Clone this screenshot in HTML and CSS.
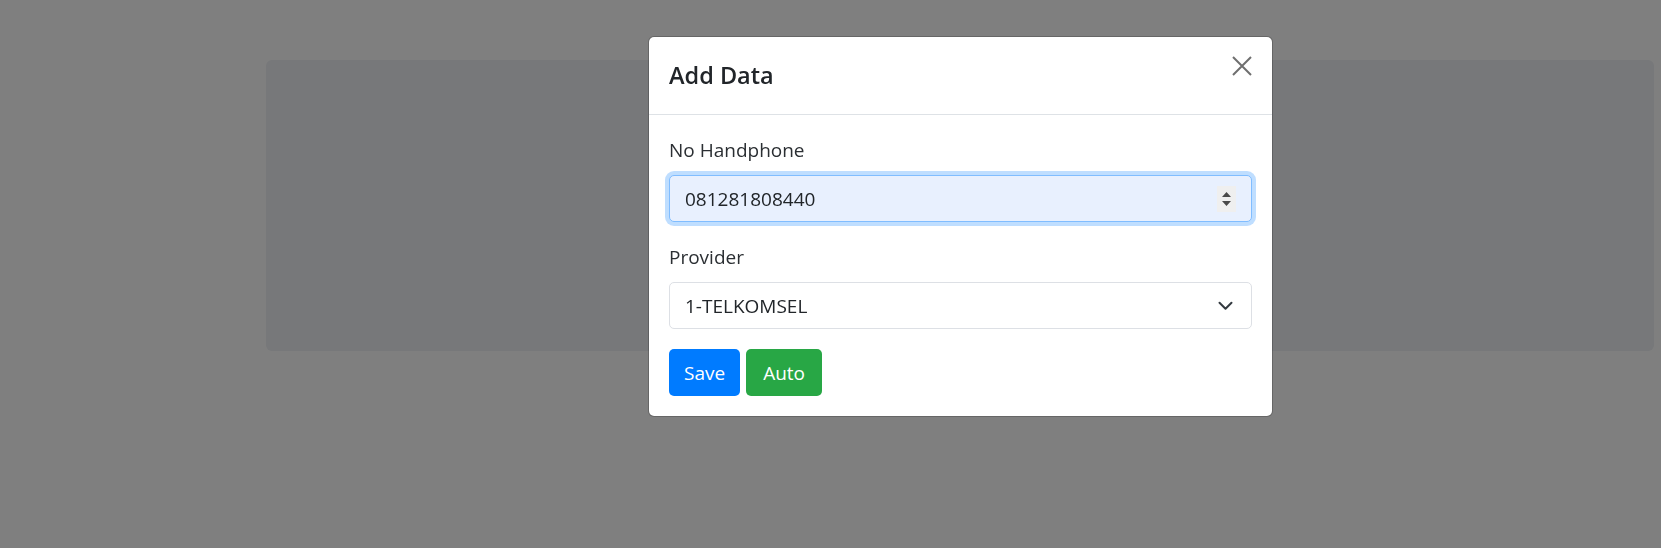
FILE: index.html
```html
<!DOCTYPE html>
<html lang="id">
<head>
<meta charset="utf-8">
<title>Add Data</title>
<link rel="stylesheet" href="styles.css">
</head>
<body>
<div class="page">
  <div class="jumbo"></div>
</div>
<div class="backdrop"></div>
<div class="modal">
  <div class="modal-content">
    <div class="modal-header">
      <h5 class="modal-title">Add Data</h5>
      <span class="btn-close" aria-label="Close">
        <svg width="20" height="20" viewBox="0 0 20 20"><path d="M1 1 L19 19 M19 1 L1 19" stroke="#6f6f6f" stroke-width="2" fill="none"/></svg>
      </span>
    </div>
    <div class="modal-body">
      <div class="form-group">
        <label class="form-label">No Handphone</label>
        <div class="form-control focused">
          <span class="value">081281808440</span>
          <span class="spinner">
            <svg width="19" height="26" viewBox="0 0 19 26"><path d="M5 11 L9.5 6 L14 11 Z M5 15 L14 15 L9.5 20 Z" fill="#4a4a4a"/></svg>
          </span>
        </div>
      </div>
      <div class="form-group">
        <label class="form-label">Provider</label>
        <div class="form-control select">
          <span class="value">1-TELKOMSEL</span>
          <svg class="chev" width="15" height="10" viewBox="0 0 15 10"><path d="M1.5 1.8 L7.5 7.8 L13.5 1.8" stroke="#343a40" stroke-width="2" fill="none" stroke-linecap="round" stroke-linejoin="round"/></svg>
        </div>
      </div>
      <div class="actions">
        <span class="btn btn-primary">Save</span>
        <span class="btn btn-success">Auto</span>
      </div>
    </div>
  </div>
</div>
</body>
</html>
```
FILE: styles.css
```css
html, body {
  margin: 0;
  padding: 0;
  background: #ffffff;
  font-family: "Open Sans", "Noto Sans", "Liberation Sans", sans-serif;
  color: #212529;
}

.page {
  display: flex;
  padding: 60px 7px 0 266px;
}

.jumbo {
  flex: 1;
  height: 291px;
  background: #eef0f4;
  border-radius: 6px;
}

.backdrop {
  position: fixed;
  inset: 0;
  background: rgba(0, 0, 0, 0.5);
}

.modal {
  position: fixed;
  top: 36px;
  left: 648px;
  width: 625px;
}

.modal-content {
  background: #ffffff;
  border: 1px solid rgba(0, 0, 0, 0.2);
  background-clip: padding-box;
  border-radius: 6px;
}

.modal-header {
  display: flex;
  justify-content: space-between;
  align-items: flex-start;
  padding: 20px;
  border-bottom: 1px solid #dee2e6;
}

.modal-title {
  margin: 0;
  font-size: 23.5px;
  font-weight: 600;
  line-height: 37px;
  color: #212529;
}

.btn-close {
  display: block;
  width: 20px;
  height: 20px;
  margin-top: -1px;
}

.btn-close svg {
  display: block;
}

.modal-body {
  padding: 20px;
}

.form-group {
  margin-bottom: 20px;
}

.form-label {
  display: block;
  font-size: 19px;
  line-height: 30px;
  margin-bottom: 10px;
  color: #2b2f33;
}

.form-control {
  box-sizing: border-box;
  height: 47px;
  display: flex;
  align-items: center;
  justify-content: space-between;
  padding: 0 15px;
  border: 1px solid #dde0e5;
  border-radius: 5px;
  background: #ffffff;
  font-size: 19px;
  color: #212529;
}

.form-control.focused {
  background: #e8f0fe;
  border-color: #80bdff;
  box-shadow: 0 0 0 4px rgba(0, 123, 255, 0.25);
}

.spinner {
  display: block;
  width: 19px;
  height: 26px;
  background: #efefef;
}

.spinner svg, .chev {
  display: block;
}

.chev {
  margin-right: 3px;
}

.actions {
  display: flex;
  gap: 6px;
}

.btn {
  box-sizing: border-box;
  height: 47px;
  display: flex;
  align-items: center;
  padding: 0 15px;
  border-radius: 5px;
  font-size: 19px;
  color: #ffffff;
}

.btn-primary {
  background: #007bff;
}

.btn-success {
  background: #28a745;
  padding: 0 17px;
}
```
